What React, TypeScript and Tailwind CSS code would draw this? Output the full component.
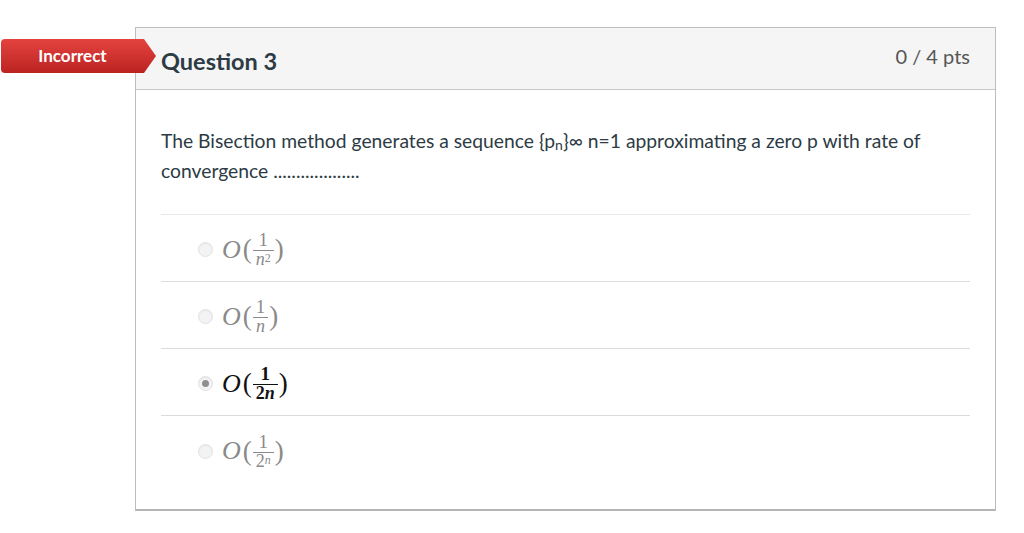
type Answer = {
  num: string;
  den: React.ReactNode;
  selected?: boolean;
};

const answers: Answer[] = [
  { num: "1", den: <>n<sup className="text-[12px] relative -top-[3px] not-italic">2</sup></> },
  { num: "1", den: <>n</> },
  { num: "1", den: <><span className="not-italic">2</span>n</>, selected: true },
  { num: "1", den: <><span className="not-italic">2</span><sup className="text-[12px] relative -top-[3px]">n</sup></> },
];

function Radio({ checked }: { checked?: boolean }) {
  return (
    <span className="w-[15px] h-[15px] rounded-full border border-[#e2e2e2] bg-[#f3f3f3] flex items-center justify-center shadow-[inset_0_1px_1px_rgba(0,0,0,0.05)]">
      {checked && <span className="w-[7px] h-[7px] rounded-full bg-[#8f8f8f]" />}
    </span>
  );
}

function BigO({ a }: { a: Answer }) {
  const color = a.selected ? "text-[#111]" : "text-[#8a8a8a]";
  return (
    <span className={`flex items-center ${color}`} style={{ fontFamily: '"Liberation Serif", "DejaVu Serif", serif' }}>
      <span className="italic text-[26px] leading-none">O</span>
      <span className="text-[27px] leading-none ml-[2px]">(</span>
      <span className={`inline-flex flex-col items-center mx-[1px] ${a.selected ? "font-bold" : ""}`}>
        <span className="text-[19px] leading-[17px] px-[3px]">{a.num}</span>
        <span className={`w-full h-px mt-[2px] ${a.selected ? "bg-[#111]" : "bg-[#8a8a8a]"}`} />
        <span className="text-[18px] leading-[17px] italic px-[3px]">{a.den}</span>
      </span>
      <span className="text-[27px] leading-none">)</span>
    </span>
  );
}

export default function App() {
  return (
    <div className="w-[1024px] h-[533px] bg-white pt-[27px] pl-[135px]" style={{ fontFamily: 'Lato, "Open Sans", sans-serif' }}>
      <div className="relative w-[861px] border border-[#bdbdbd] border-b-2 border-b-[#b5b5b5] bg-white">
        <div
          className="absolute -left-[135px] top-[11px] w-[155px] h-[34px] rounded-l-[4px] bg-gradient-to-b from-[#e4433f] to-[#bb2321] flex items-center [clip-path:polygon(0_0,143px_0,100%_50%,143px_100%,0_100%)]"
        >
          <span className="w-[143px] text-center text-white font-bold text-[17px]">Incorrect</span>
        </div>
        <div className="h-[62px] bg-[#f5f5f5] border-b border-[#c7c7c7] flex justify-between px-[25px]">
          <h2 className="pt-[20px] text-[23.5px] font-bold text-[#2d3b45] leading-[26px]">Question 3</h2>
          <div className="pt-[16px] text-[20px] text-[#555] leading-[24px]">0 / 4 pts</div>
        </div>
        <div className="px-[25px] pt-[36px] pb-[26px]">
          <p className="text-[19.3px] leading-[30px] text-[#2d3b45]">
            The Bisection method generates a sequence {"{"}p<sub className="text-[14px] leading-none -bottom-[2px]">n</sub>{"}"}∞ n=1 approximating a zero p with rate of convergence ...................
          </p>
          <div className="mt-[28px] border-t border-[#e8e8e8]">
            {answers.map((a, i) => (
              <div
                key={i}
                className={`h-[67px] flex items-center pl-[37px] gap-[9px] pt-[3px] ${i < answers.length - 1 ? "border-b border-[#dcdcdc]" : ""}`}
              >
                <Radio checked={a.selected} />
                <BigO a={a} />
              </div>
            ))}
          </div>
        </div>
      </div>
    </div>
  );
}
